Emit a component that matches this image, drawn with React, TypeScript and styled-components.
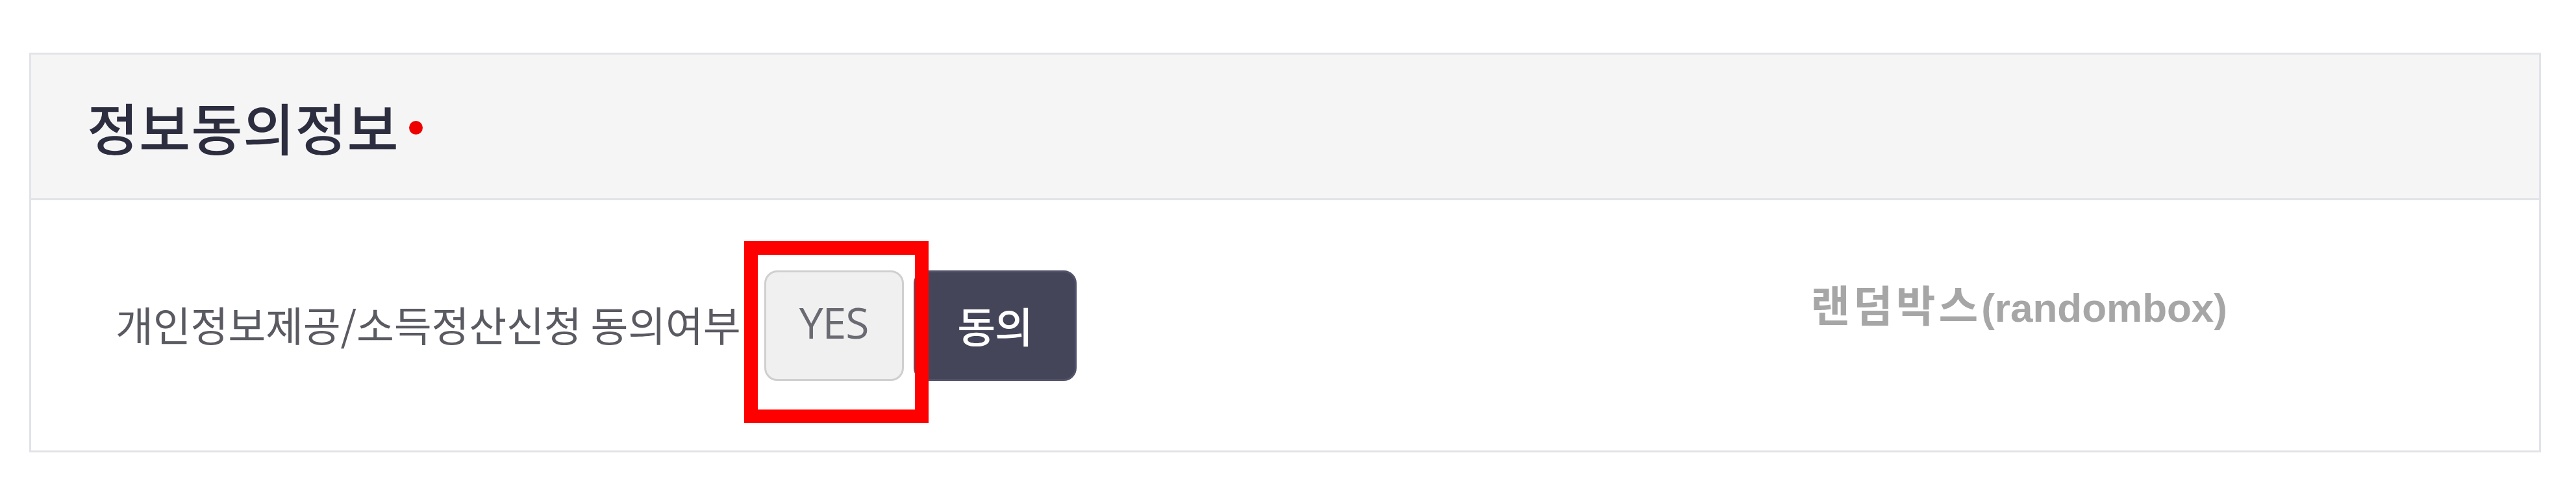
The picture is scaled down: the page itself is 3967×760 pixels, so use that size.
import React from "react";
import styled, { createGlobalStyle } from "styled-components";

const GlobalStyle = createGlobalStyle`
  html, body {
    margin: 0;
    padding: 0;
    background: #ffffff;
  }
  body {
    font-family: "Noto Sans CJK KR", "Noto Sans", sans-serif;
  }
`;

const Page = styled.div`
  padding: 81px 0 0 45px;
`;

const Panel = styled.section`
  width: 3868px;
  box-sizing: border-box;
  border: 3px solid #e2e3e8;
  background: #ffffff;
`;

const Header = styled.header`
  height: 221px;
  border-bottom: 3px solid #e2e3e8;
  background: #f5f5f5;
  display: flex;
  align-items: center;
  padding-left: 86px;
`;

const Title = styled.h2`
  margin: 0;
  font-family: "Noto Sans CJK KR", "Noto Sans", sans-serif;
  font-size: 86px;
  font-weight: 500;
  color: #2c2d3f;
  letter-spacing: 1px;
  line-height: 1;
  display: flex;
  align-items: center;
`;

const RequiredDot = styled.span`
  display: inline-block;
  width: 21px;
  height: 21px;
  border-radius: 50%;
  background: #ee0000;
  margin-left: 15px;
  margin-top: 4px;
`;

const Body = styled.div`
  height: 385px;
  display: flex;
  align-items: center;
  padding-left: 130px;
  padding-right: 480px;
`;

const Label = styled.span`
  font-family: "Noto Sans CJK KR", "Noto Sans", sans-serif;
  font-size: 63px;
  font-weight: 400;
  color: #5a5a62;
  letter-spacing: -0.2px;
  white-space: nowrap;
  margin-right: 36px;
  margin-top: -6px;
`;

const Marked = styled.div`
  position: relative;
  display: flex;
`;

const Highlight = styled.div`
  position: absolute;
  left: -31px;
  top: -45px;
  width: 284px;
  height: 280px;
  box-sizing: border-box;
  border: 21px solid #ff0000;
  z-index: 2;
  pointer-events: none;
`;

const ChoiceButton = styled.button<{ $dark?: boolean }>`
  box-sizing: border-box;
  height: 170px;
  width: ${(p) => (p.$dark ? "251px" : "215px")};
  border-radius: 20px;
  border: 3px solid ${(p) => (p.$dark ? "#52526a" : "#cfcfcf")};
  background: ${(p) => (p.$dark ? "#45455a" : "#f0f0f0")};
  color: ${(p) => (p.$dark ? "#ffffff" : "#6a6a72")};
  font-family: ${(p) =>
    p.$dark
      ? '"Noto Sans CJK KR", "Noto Sans", sans-serif'
      : '"Open Sans", "Noto Sans", sans-serif'};
  font-size: ${(p) => (p.$dark ? "64px" : "66px")};
  font-weight: ${(p) => (p.$dark ? 500 : 400)};
  letter-spacing: -1px;
  line-height: 1;
  padding: 0 0 ${(p) => (p.$dark ? "4px" : "12px")} 0;
  display: flex;
  align-items: center;
  justify-content: center;
  cursor: pointer;
  margin-left: ${(p) => (p.$dark ? "15px" : "0")};
`;

const RandomBox = styled.span`
  margin-left: auto;
  margin-bottom: 70px;
  font-family: "Liberation Sans", "Noto Sans CJK KR", sans-serif;
  font-size: 62px;
  font-weight: 700;
  color: #a6a6a6;
  white-space: nowrap;
`;

const RandomBoxKo = styled.span`
  font-size: 66px;
  letter-spacing: 5px;
`;

export default function App() {
  return (
    <>
      <GlobalStyle />
      <Page>
        <Panel>
          <Header>
            <Title>
              정보동의정보
              <RequiredDot />
            </Title>
          </Header>
          <Body>
            <Label>개인정보제공/소득정산신청 동의여부</Label>
            <Marked>
              <ChoiceButton>YES</ChoiceButton>
              <Highlight />
            </Marked>
            <ChoiceButton $dark>동의</ChoiceButton>
            <RandomBox>
              <RandomBoxKo>랜덤박스</RandomBoxKo>(randombox)
            </RandomBox>
          </Body>
        </Panel>
      </Page>
    </>
  );
}
